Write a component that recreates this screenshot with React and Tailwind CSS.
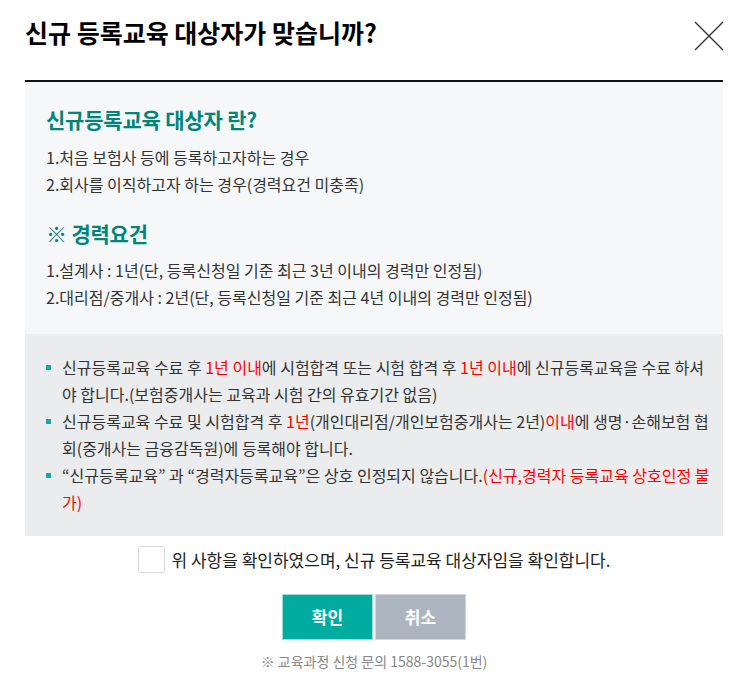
import React, { useState } from 'react';

const font = { fontFamily: '"Noto Sans CJK KR", "Noto Sans", sans-serif' };

const Bullet = ({ children }) => (
    <li className="relative pl-[16px]">
        <span className="absolute left-0 top-[11px] w-[5px] h-[5px] bg-[#14a99c]"></span>
        {children}
    </li>
);

const Red = ({ children }) => <span className="text-[#ff0000]">{children}</span>;

const App = () => {
    const [checked, setChecked] = useState(false);

    return (
        <div className="w-[748px] h-[698px] bg-white text-[#333]" style={font}>
            <div className="mx-[25px]">
                {/* 헤더 */}
                <div className="h-[82px] border-b-2 border-[#111] flex items-start justify-between">
                    <h1 className="mt-[16px] text-[25px] leading-[32px] font-bold text-black">
                        신규 등록교육 대상자가 맞습니까?
                    </h1>
                    <button className="mt-[21px] mr-[-1px]">
                        <svg width="30" height="30" viewBox="0 0 30 30">
                            <path d="M1 1 L29 29 M29 1 L1 29" stroke="#333" strokeWidth="1.4" fill="none" />
                        </svg>
                    </button>
                </div>

                {/* 안내 */}
                <div className="bg-[#f6f7f9] pl-[21px] pt-[23px] pb-[23px]">
                    <h2 className="text-[21px] leading-[28px] font-bold text-[#00857a] tracking-[-0.2px]">신규등록교육 대상자 란?</h2>
                    <ul className="mt-[11px] text-[16px] leading-[27px] text-[#333]">
                        <li>1.처음 보험사 등에 등록하고자하는 경우</li>
                        <li>2.회사를 이직하고자 하는 경우(경력요건 미충족)</li>
                    </ul>
                    <h2 className="mt-[21px] text-[21px] leading-[28px] font-bold text-[#00857a] tracking-[-0.2px]">
                        <span className="font-normal">※</span> 경력요건
                    </h2>
                    <ul className="mt-[10px] text-[16px] leading-[27px] text-[#333]">
                        <li>1.설계사 : 1년(단, 등록신청일 기준 최근 3년 이내의 경력만 인정됨)</li>
                        <li>2.대리점/중개사 : 2년(단, 등록신청일 기준 최근 4년 이내의 경력만 인정됨)</li>
                    </ul>
                </div>

                <div className="bg-[#ebecee] pl-[21px] pr-[12px] pt-[20px] pb-[20px]">
                    <ul className="text-[16px] leading-[27px] text-[#333]">
                        <Bullet>
                            신규등록교육 수료 후 <Red>1년 이내</Red>에 시험합격 또는 시험 합격 후 <Red>1년 이내</Red>에 신규등록교육을 수료 하셔야 합니다.(보험중개사는 교육과 시험 간의 유효기간 없음)
                        </Bullet>
                        <Bullet>
                            신규등록교육 수료 및 시험합격 후 <Red>1년</Red>(개인대리점/개인보험중개사는 2년)<Red>이내</Red>에 생명·손해보험 협회(중개사는 금융감독원)에 등록해야 합니다.
                        </Bullet>
                        <Bullet>
                            “신규등록교육” 과 “경력자등록교육”은 상호 인정되지 않습니다.<Red>(신규,경력자 등록교육 상호인정 불가)</Red>
                        </Bullet>
                    </ul>
                </div>

                {/* 확인 체크 */}
                <label className="mt-[10px] flex items-center justify-center gap-[7px] cursor-pointer">
                    <span
                        onClick={() => setChecked(!checked)}
                        className={`w-[27px] h-[27px] rounded-[3px] border border-[#d9d9d9] bg-white flex items-center justify-center ${checked ? 'border-[#00ab9f]' : ''}`}
                    >
                        {checked && <span className="text-[#00ab9f] text-[16px]">✓</span>}
                    </span>
                    <span className="text-[17px] leading-[24px] text-[#222]">위 사항을 확인하였으며, 신규 등록교육 대상자임을 확인합니다.</span>
                </label>

                <div className="mt-[21px] flex justify-center gap-[2px]">
                    <button className="w-[91px] h-[46px] bg-[#00ab9f] border border-[#9fded8] text-white text-[17px] font-bold">확인</button>
                    <button className="w-[91px] h-[46px] bg-[#adb5c1] border border-[#d2d7de] text-white text-[17px] font-bold">취소</button>
                </div>

                <p className="mt-[11px] text-center text-[14px] leading-[20px] text-[#888]">※ 교육과정 신청 문의 1588-3055(1번)</p>
            </div>
        </div>
    );
};

export default App;
